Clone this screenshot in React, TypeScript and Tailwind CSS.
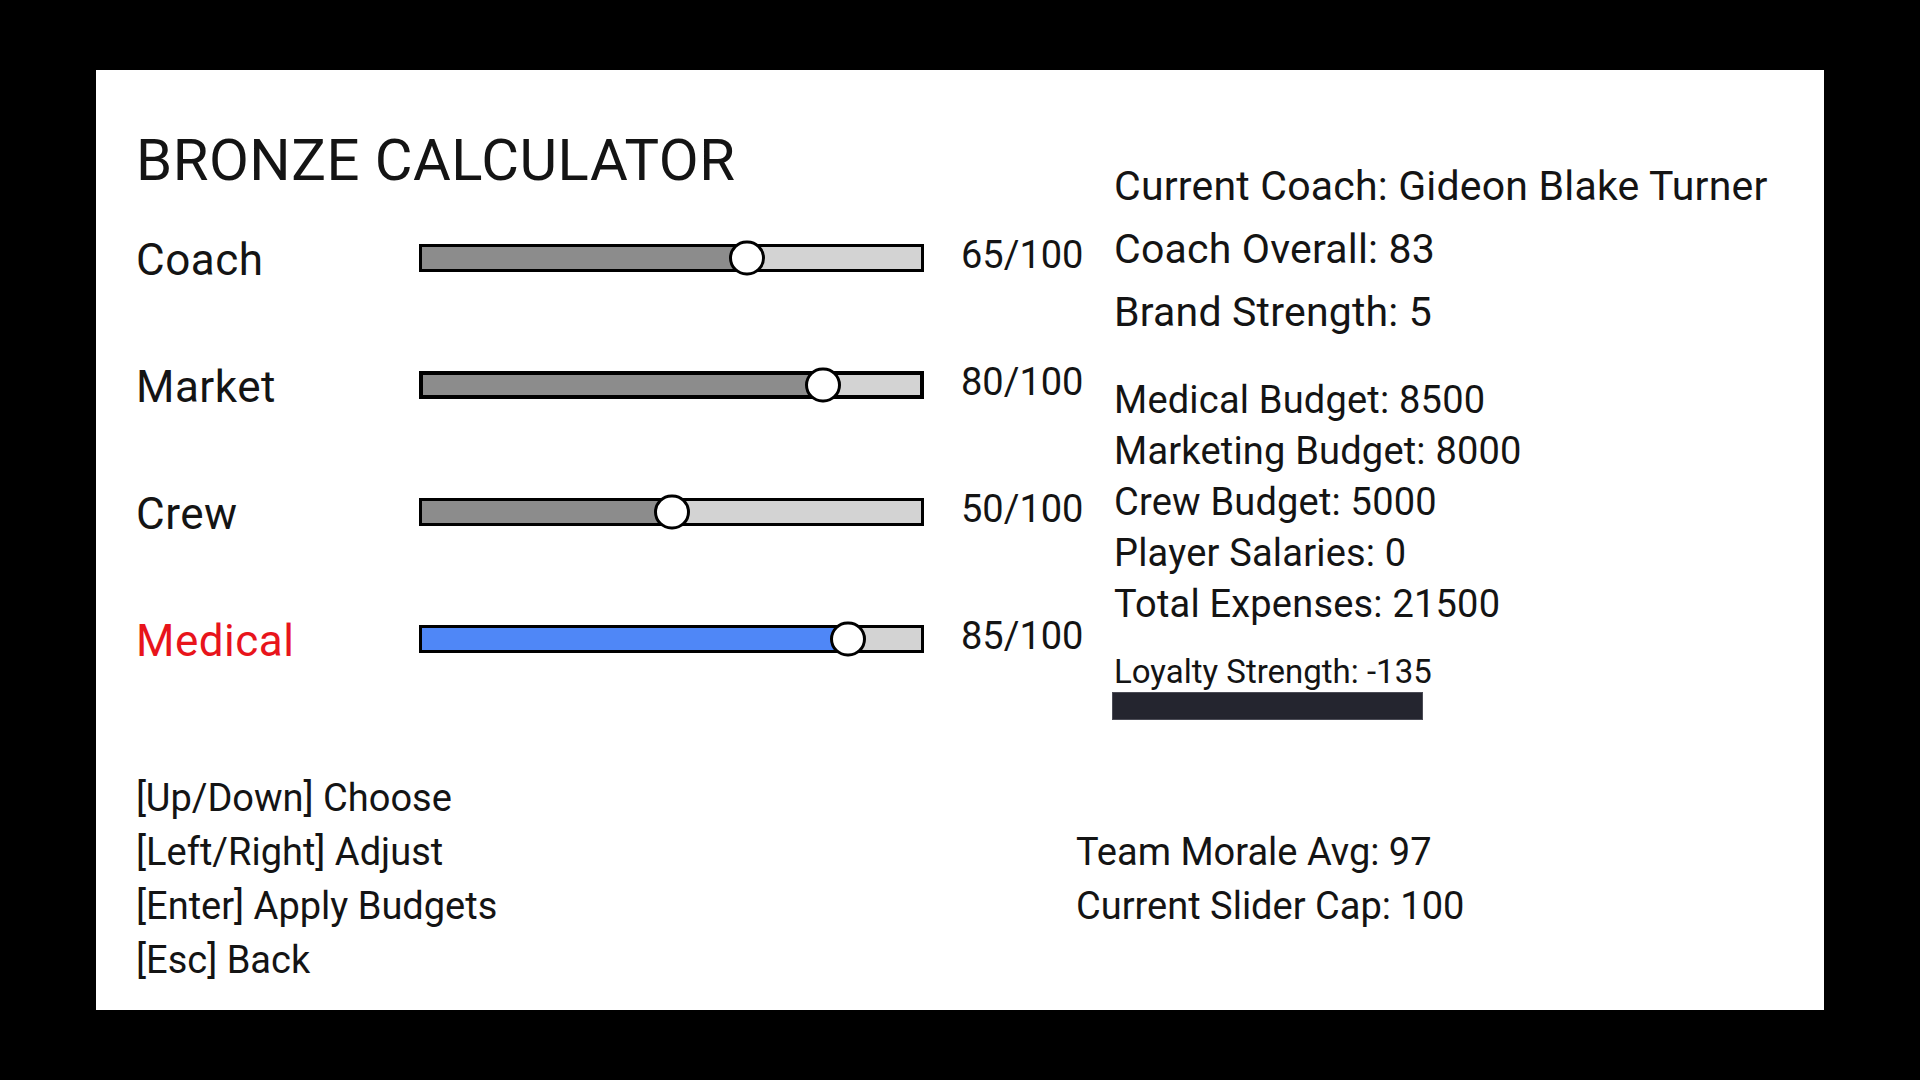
import React from 'react';

interface SliderRow {
  name: string;
  value: number;
  thick?: boolean;
  active?: boolean;
}

const TRACK_W = 505;

const sliders: SliderRow[] = [
  { name: 'Coach', value: 65 },
  { name: 'Market', value: 80, thick: true },
  { name: 'Crew', value: 50 },
  { name: 'Medical', value: 85, active: true },
];

const coachInfo = ['Current Coach: Gideon Blake Turner', 'Coach Overall: 83', 'Brand Strength: 5'];

const budgets = [
  'Medical Budget: 8500',
  'Marketing Budget: 8000',
  'Crew Budget: 5000',
  'Player Salaries: 0',
  'Total Expenses: 21500',
];

const helpLines = ['[Up/Down] Choose', '[Left/Right] Adjust', '[Enter] Apply Budgets', '[Esc] Back'];

const Slider: React.FC<{ row: SliderRow }> = ({ row }) => {
  const border = row.thick ? 4 : 3;
  // thumb centre sits at value% of the outer track width
  const centre = (row.value / 100) * TRACK_W;
  return (
    <div
      className={`relative w-[505px] h-[28px] bg-[#d3d3d3] border-black ${row.thick ? 'border-[4px]' : 'border-[3px]'}`}
    >
      <div
        className={`h-full ${row.active ? 'bg-[#4f87f7]' : 'bg-[#8c8c8c]'}`}
        style={{ width: centre - border }}
      />
      <div
        className="absolute top-1/2 -translate-y-1/2 w-[36px] h-[35px] rounded-full border-[3px] border-black bg-white"
        style={{ left: centre - border - 18 }}
      />
    </div>
  );
};

export default function App() {
  return (
    <div className="w-full h-screen bg-black flex items-center justify-center font-['Roboto','Open_Sans',sans-serif] text-[#141414]">
      <div className="w-[1728px] h-[940px] bg-white flex flex-col">
        {/* Top: sliders + coach / budget info */}
        <div className="flex">
          <div className="w-[1018px] pl-10 pt-[61px] flex flex-col">
            <h1 className="text-[58px] leading-none h-[58px] tracking-[0.5px]">BRONZE CALCULATOR</h1>
            <div className="mt-[37px] flex flex-col gap-[63px]">
              {sliders.map((row) => (
                <div key={row.name} className="h-[64px] flex items-center">
                  <span
                    className={`w-[283px] mt-[4px] text-[44px] leading-none tracking-[0.5px] ${row.active ? 'text-[#e8141b]' : ''}`}
                  >
                    {row.name}
                  </span>
                  <Slider row={row} />
                  <span className="ml-[37px] mb-[6px] text-[38px] leading-none">{row.value}/100</span>
                </div>
              ))}
            </div>
          </div>

          <div className="pt-[85px] flex flex-col">
            <div className="flex flex-col text-[41px] leading-[63px] tracking-[0.2px]">
              {coachInfo.map((line) => (
                <span key={line}>{line}</span>
              ))}
            </div>
            <div className="mt-[31px] flex flex-col text-[38px] leading-[51px] tracking-[0.2px]">
              {budgets.map((line) => (
                <span key={line}>{line}</span>
              ))}
            </div>
            <span className="mt-[22px] text-[33px] leading-[40px]">Loyalty Strength: -135</span>
            <div className="w-[311px] h-[28px] -ml-[2px] bg-[#24252f] border border-[#4b4c56]" />
          </div>
        </div>

        {/* Bottom: key help + morale */}
        <div className="mt-[51px] flex">
          <div className="w-[980px] pl-10 flex flex-col text-[38px] leading-[54px]">
            {helpLines.map((line) => (
              <span key={line}>{line}</span>
            ))}
          </div>
          <div className="pt-[54px] flex flex-col text-[38px] leading-[54px]">
            <span>Team Morale Avg: 97</span>
            <span>Current Slider Cap: 100</span>
          </div>
        </div>
      </div>
    </div>
  );
}
